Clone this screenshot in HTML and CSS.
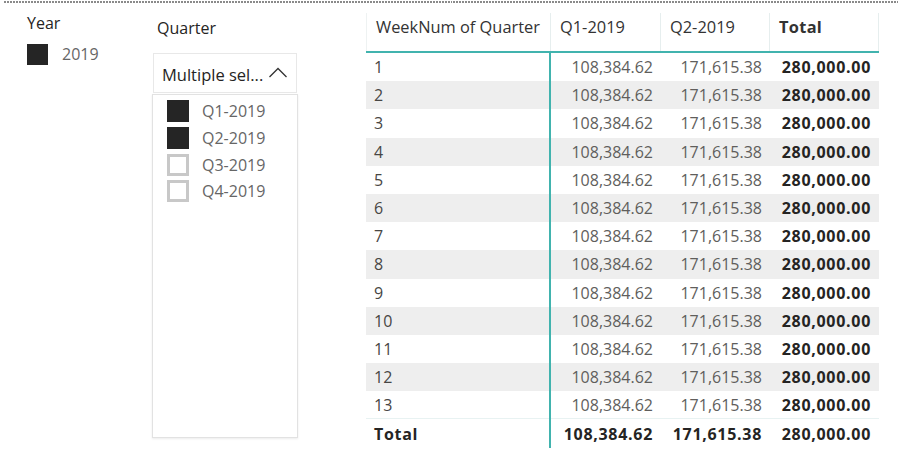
FILE: index.html
```html
<!DOCTYPE html>
<html>
<head>
<meta charset="utf-8">
<link rel="stylesheet" href="styles.css">
</head>
<body>
<div class="frame">
  <section class="slicer year">
    <div class="title">Year</div>
    <div class="item"><span class="box on"></span><span class="label">2019</span></div>
  </section>
  <section class="slicer quarter">
    <div class="title">Quarter</div>
    <div class="dropdown"><span>Multiple sel...</span>
      <svg class="chev" width="20" height="11" viewBox="0 0 20 11"><polyline points="1.5,10 10,1.5 18.5,10" fill="none" stroke="#333" stroke-width="1.3"/></svg>
    </div>
    <div class="list">
      <div class="item"><span class="box on"></span><span class="label">Q1-2019</span></div>
      <div class="item"><span class="box on"></span><span class="label">Q2-2019</span></div>
      <div class="item"><span class="box"></span><span class="label">Q3-2019</span></div>
      <div class="item"><span class="box"></span><span class="label">Q4-2019</span></div>
    </div>
  </section>
  <section class="matrix">
    <div class="row head"><div class="c first">WeekNum of Quarter</div><div class="c">Q1-2019</div><div class="c">Q2-2019</div><div class="c tot">Total</div></div>
    <div class="row"><div class="c first">1</div><div class="c num">108,384.62</div><div class="c num">171,615.38</div><div class="c num tot">280,000.00</div></div>
    <div class="row alt"><div class="c first">2</div><div class="c num">108,384.62</div><div class="c num">171,615.38</div><div class="c num tot">280,000.00</div></div>
    <div class="row"><div class="c first">3</div><div class="c num">108,384.62</div><div class="c num">171,615.38</div><div class="c num tot">280,000.00</div></div>
    <div class="row alt"><div class="c first">4</div><div class="c num">108,384.62</div><div class="c num">171,615.38</div><div class="c num tot">280,000.00</div></div>
    <div class="row"><div class="c first">5</div><div class="c num">108,384.62</div><div class="c num">171,615.38</div><div class="c num tot">280,000.00</div></div>
    <div class="row alt"><div class="c first">6</div><div class="c num">108,384.62</div><div class="c num">171,615.38</div><div class="c num tot">280,000.00</div></div>
    <div class="row"><div class="c first">7</div><div class="c num">108,384.62</div><div class="c num">171,615.38</div><div class="c num tot">280,000.00</div></div>
    <div class="row alt"><div class="c first">8</div><div class="c num">108,384.62</div><div class="c num">171,615.38</div><div class="c num tot">280,000.00</div></div>
    <div class="row"><div class="c first">9</div><div class="c num">108,384.62</div><div class="c num">171,615.38</div><div class="c num tot">280,000.00</div></div>
    <div class="row alt"><div class="c first">10</div><div class="c num">108,384.62</div><div class="c num">171,615.38</div><div class="c num tot">280,000.00</div></div>
    <div class="row"><div class="c first">11</div><div class="c num">108,384.62</div><div class="c num">171,615.38</div><div class="c num tot">280,000.00</div></div>
    <div class="row alt"><div class="c first">12</div><div class="c num">108,384.62</div><div class="c num">171,615.38</div><div class="c num tot">280,000.00</div></div>
    <div class="row last"><div class="c first">13</div><div class="c num">108,384.62</div><div class="c num">171,615.38</div><div class="c num tot">280,000.00</div></div>
    <div class="row total"><div class="c first">Total</div><div class="c num">108,384.62</div><div class="c num">171,615.38</div><div class="c num">280,000.00</div></div>
  </section>
</div>
</body>
</html>
```
FILE: styles.css
```css
html, body {
  margin: 0;
  padding: 0;
  background: #fff;
}
body {
  width: 898px;
  height: 456px;
  overflow: hidden;
  font-family: "Open Sans", "Noto Sans", sans-serif;
  font-size: 16px;
  line-height: 22px;
  color: #252423;
}
.frame {
  margin: 1px 0 0 3px;
  height: 455px;
  border-left: 1px solid #e4e4e4;
  border-top: 2px solid transparent;
  border-image: repeating-linear-gradient(90deg, #8a8a8a 0 2px, #fff 2px 3px) 2 0 0 0;
  display: flex;
  box-sizing: border-box;
}
.slicer {
  display: flex;
  flex-direction: column;
}
.year {
  width: 148px;
  padding: 9px 0 0 23px;
  box-sizing: border-box;
}
.quarter {
  width: 146px;
  padding-top: 14px;
  box-sizing: border-box;
}
.title {
  color: #252423;
}
.year .title { margin-bottom: 9px; }
.quarter .title { padding-left: 5px; margin-bottom: 14px; }
.item {
  display: flex;
  align-items: center;
}
.box {
  width: 21px;
  height: 21px;
  box-sizing: border-box;
  border: 3px solid #c8c8c8;
  background: #fff;
  flex: none;
}
.box.on {
  background: #252525;
  border-color: #252525;
}
.label {
  color: #666;
  margin-left: 14px;
}
.dropdown {
  margin: 0 1px;
  height: 40px;
  border: 1px solid #e8e8e8;
  box-sizing: border-box;
  display: flex;
  align-items: center;
  justify-content: space-between;
  padding: 3px 8px 0 8px;
  color: #252423;
  font-size: 16.5px;
}
.chev { margin-top: -4px; }
.list {
  margin-top: 1px;
  height: 344px;
  border: 1px solid #e2e2e2;
  box-shadow: 0 1px 2px rgba(0,0,0,0.08);
  box-sizing: border-box;
  padding: 3px 0 0 14px;
}
.list .item { height: 26.7px; }
.list .box { width: 22px; height: 22px; }
.list .label { margin-left: 13px; }
.matrix {
  margin: 10px 0 0 68px;
  width: 513px;
  display: flex;
  flex-direction: column;
}
.row {
  display: grid;
  grid-template-columns: 185px 110px 109px 109px;
  height: 28.2px;
}
.row.alt { background: #eeeeee; }
.row.last { box-shadow: inset 0 -1px 0 #e8f2f2; }
.c {
  display: flex;
  align-items: center;
  padding: 0 8px;
  color: #605e5c;
  white-space: nowrap;
}
.c.first {
  color: #484644;
  border-right: 2px solid #41b3ae;
}
.c.num { justify-content: flex-end; }
.c.tot, .total .c {
  font-weight: 700;
  color: #252423;
  letter-spacing: 0.7px;
}
.row.head {
  height: 38px;
  border-bottom: 2px solid #41b3ae;
}
.head .c {
  align-items: flex-end;
  padding: 0 9px 13px 9px;
  color: #333;
  font-size: 16.4px;
  border-right: 1px solid #e6eeee;
}
.head .c.first { border-left: 1px solid #eef2f2; }
.head .c.tot { letter-spacing: 0.3px; }
```
